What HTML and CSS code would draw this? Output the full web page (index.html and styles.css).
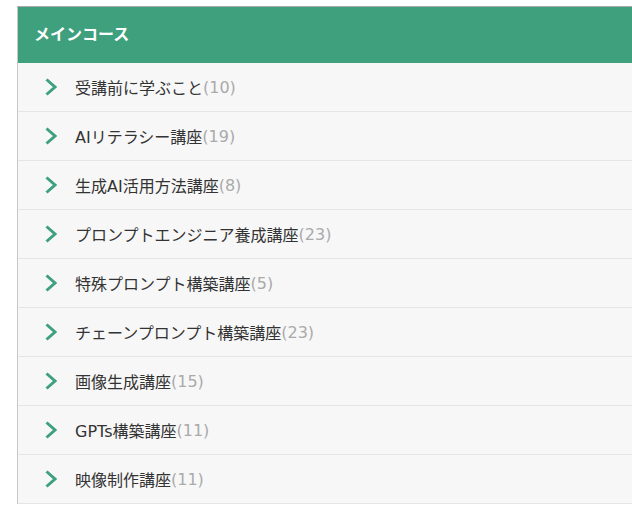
FILE: index.html
```html
<!DOCTYPE html>
<html lang="ja">
<head>
    <meta charset="UTF-8">
    <title>メインコース</title>
    <link rel="stylesheet" href="styles.css">
</head>
<body>
    <section class="course-box">
        <h2 class="course-title">メインコース</h2>
        <ul class="course-list">
            <li><a href="#"><svg class="chev" viewBox="0 0 12 18"><polyline points="1.5,1.5 10,9 1.5,16.5"/></svg>受講前に学ぶこと<span class="count">(10)</span></a></li>
            <li><a href="#"><svg class="chev" viewBox="0 0 12 18"><polyline points="1.5,1.5 10,9 1.5,16.5"/></svg>AIリテラシー講座<span class="count">(19)</span></a></li>
            <li><a href="#"><svg class="chev" viewBox="0 0 12 18"><polyline points="1.5,1.5 10,9 1.5,16.5"/></svg>生成AI活用方法講座<span class="count">(8)</span></a></li>
            <li><a href="#"><svg class="chev" viewBox="0 0 12 18"><polyline points="1.5,1.5 10,9 1.5,16.5"/></svg>プロンプトエンジニア養成講座<span class="count">(23)</span></a></li>
            <li><a href="#"><svg class="chev" viewBox="0 0 12 18"><polyline points="1.5,1.5 10,9 1.5,16.5"/></svg>特殊プロンプト構築講座<span class="count">(5)</span></a></li>
            <li><a href="#"><svg class="chev" viewBox="0 0 12 18"><polyline points="1.5,1.5 10,9 1.5,16.5"/></svg>チェーンプロンプト構築講座<span class="count">(23)</span></a></li>
            <li><a href="#"><svg class="chev" viewBox="0 0 12 18"><polyline points="1.5,1.5 10,9 1.5,16.5"/></svg>画像生成講座<span class="count">(15)</span></a></li>
            <li><a href="#"><svg class="chev" viewBox="0 0 12 18"><polyline points="1.5,1.5 10,9 1.5,16.5"/></svg>GPTs構築講座<span class="count">(11)</span></a></li>
            <li><a href="#"><svg class="chev" viewBox="0 0 12 18"><polyline points="1.5,1.5 10,9 1.5,16.5"/></svg>映像制作講座<span class="count">(11)</span></a></li>
        </ul>
    </section>
</body>
</html>
```
FILE: styles.css
```css
html {
    overflow: hidden;
}

body {
    margin: 0;
    padding: 6px 0 0 17px;
    background: #fff;
    font-family: "DejaVu Sans", "Noto Sans CJK JP", sans-serif;
    color: #333;
}

/* Box */
.course-box {
    width: 615px;
    border-top: 1px solid #aaa;
    border-left: 1px solid #c8c8c8;
}

.course-title {
    margin: 0;
    height: 56px;
    padding-left: 16px;
    background-color: #3ea07c;
    color: #fff;
    font-family: "Noto Sans CJK JP", sans-serif;
    font-size: 16px;
    font-weight: bold;
    line-height: 53px;
}

/* List */
.course-list {
    margin: 0;
    padding: 0;
    list-style: none;
}

.course-list li {
    border-bottom: 1px solid #e5e5e5;
    background: #f7f7f7;
}

.course-list a {
    display: flex;
    align-items: center;
    height: 48px;
    padding-left: 27px;
    color: #333;
    font-size: 16px;
    text-decoration: none;
}

.chev {
    width: 12px;
    height: 18px;
    margin-right: 18px;
    fill: none;
    stroke: #3ea07c;
    stroke-width: 3;
}

.count {
    color: #aaa;
}
```
